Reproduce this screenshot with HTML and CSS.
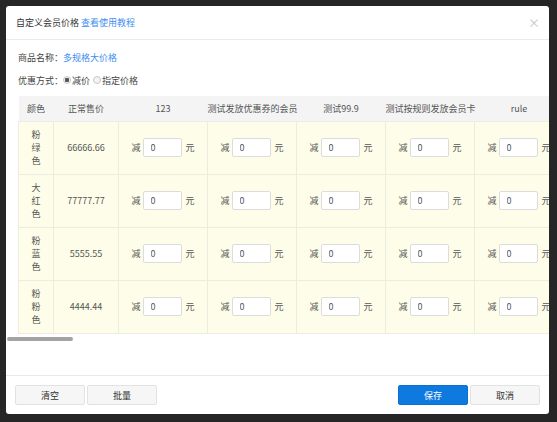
FILE: index.html
```html
<!DOCTYPE html>
<html lang="zh-CN">
<head>
    <meta charset="UTF-8">
    <title>自定义会员价格</title>
    <link rel="stylesheet" href="styles.css">
</head>
<body>
    <div class="modal">
        <div class="modal-header">
            <div class="modal-title">自定义会员价格 <a href="#" class="link">查看使用教程</a></div>
            <span class="modal-close">&times;</span>
        </div>

        <div class="modal-body">
            <div class="info-row">
                <span class="info-label">商品名称：</span><a href="#" class="link">多规格大价格</a>
            </div>
            <div class="info-row">
                <span class="info-label">优惠方式：</span>
                <label class="radio"><input type="radio" name="mode" checked>减价</label>
                <label class="radio"><input type="radio" name="mode">指定价格</label>
            </div>

            <div class="grid-wrap">
                <table class="price-grid" id="price-grid">
                    <thead><tr id="grid-head"></tr></thead>
                    <tbody id="grid-body"></tbody>
                </table>
            </div>
            <!-- horizontal scroll indicator -->
            <div class="scroll-track"><div class="scroll-thumb"></div></div>
        </div>

        <div class="modal-footer">
            <div class="btn-group">
                <button class="btn">清空</button>
                <button class="btn">批量</button>
            </div>
            <div class="btn-group">
                <button class="btn btn-primary">保存</button>
                <button class="btn">取消</button>
            </div>
        </div>
    </div>

    <script>
        var levels = ['123', '测试发放优惠券的会员', '测试99.9', '测试按规则发放会员卡', 'rule'];

        var skus = [
            { color: '粉绿色', price: '66666.66' },
            { color: '大红色', price: '77777.77' },
            { color: '粉蓝色', price: '5555.55' },
            { color: '粉粉色', price: '4444.44' }
        ];

        function renderGrid() {
            var head = document.getElementById('grid-head');
            var body = document.getElementById('grid-body');
            var html = '<th class="col-color">颜色</th><th class="col-price">正常售价</th>';
            levels.forEach(function (name) {
                html += '<th class="col-level">' + name + '</th>';
            });
            head.innerHTML = html;

            skus.forEach(function (sku) {
                var row = document.createElement('tr');
                var cells = '<td class="col-color">' + sku.color + '</td><td class="col-price">' + sku.price + '</td>';
                levels.forEach(function () {
                    cells += '<td class="col-level"><span class="unit">减</span><input type="text" class="cut-input" value="0"><span class="unit">元</span></td>';
                });
                row.innerHTML = cells;
                body.appendChild(row);
            });

            document.getElementById('price-grid').style.width = (35 + 65 + levels.length * 89) + 'px';
        }

        renderGrid();
    </script>
</body>
</html>
```

FILE: styles.css
```css
* {
    margin: 0;
    padding: 0;
    box-sizing: border-box;
}

body {
    background-color: #262626;
    font-family: "Noto Sans CJK SC", "Liberation Sans", sans-serif;
    font-size: 9px;
    color: #444;
    overflow: hidden;
}

.modal {
    width: 543px;
    height: 408px;
    margin: 6px 0 0 6px;
    background-color: #fff;
    border-radius: 3px;
    display: flex;
    flex-direction: column;
    overflow: hidden;
}

.link {
    color: #3d8ef0;
    text-decoration: none;
}

/* header */
.modal-header {
    height: 34px;
    display: flex;
    align-items: center;
    justify-content: space-between;
    padding: 0 9px 0 10px;
    border-bottom: 1px solid #eaeaea;
}

.modal-title {
    color: #333;
    font-size: 9px;
}

.modal-close {
    color: #c4c4c4;
    font-size: 12px;
    line-height: 1;
}

/* body */
.modal-body {
    flex: 1;
    padding-top: 9px;
}

.info-row {
    display: flex;
    align-items: center;
    height: 16px;
    padding-left: 12px;
    margin-bottom: 7px;
    color: #444;
}

.radio {
    display: inline-flex;
    align-items: center;
    margin-right: 3px;
}

.radio input {
    appearance: none;
    width: 8px;
    height: 8px;
    margin-right: 1px;
    border: 1px solid #c8c8c8;
    border-radius: 50%;
    background: #f3f3f3;
}

.radio input:checked {
    background: radial-gradient(circle, #555 0, #555 2px, #f3f3f3 2.5px);
}

.grid-wrap {
    margin-top: 8px;
    padding-left: 12px;
    overflow: hidden;
}

.scroll-track {
    height: 4px;
    margin: 3px 0 0 1px;
}

.scroll-thumb {
    width: 66px;
    height: 100%;
    background-color: #a3a3a3;
    border-radius: 2px;
}

.price-grid {
    table-layout: fixed;
    border-collapse: collapse;
    white-space: nowrap;
}

.price-grid th {
    height: 25px;
    background-color: #f4f4f4;
    font-weight: normal;
    color: #555;
    text-align: center;
    border-bottom: 1px solid #ececec;
}

.price-grid td {
    height: 53px;
    background-color: #fdfde9;
    border: 1px solid #ececdf;
    text-align: center;
    color: #555;
}

.price-grid .col-color {
    width: 35px;
}

.price-grid td.col-color {
    white-space: normal;
    padding: 0 11px;
    line-height: 13px;
}

.price-grid .col-price {
    width: 65px;
}

.price-grid .col-level {
    width: 89px;
}

.unit {
    color: #555;
    vertical-align: middle;
}

.cut-input {
    width: 39px;
    height: 19px;
    margin: 0 4px 0 2px;
    padding: 0 7px;
    border: 1px solid #dcdcdc;
    border-radius: 2px;
    background: #fff;
    font-family: inherit;
    font-size: 9px;
    color: #555;
    vertical-align: middle;
}

/* footer */
.modal-footer {
    display: flex;
    justify-content: space-between;
    padding: 9px 9px;
    border-top: 1px solid #e8e8e8;
}

.btn-group {
    display: flex;
    gap: 2px;
}

.btn {
    width: 70px;
    height: 20px;
    background-color: #f6f6f6;
    border: 1px solid #e2e2e2;
    border-radius: 2px;
    font-family: inherit;
    font-size: 9px;
    color: #333;
    cursor: pointer;
}

.btn-primary {
    background-color: #0e7ae0;
    border-color: #0b70d2;
    color: #fff;
}
```
